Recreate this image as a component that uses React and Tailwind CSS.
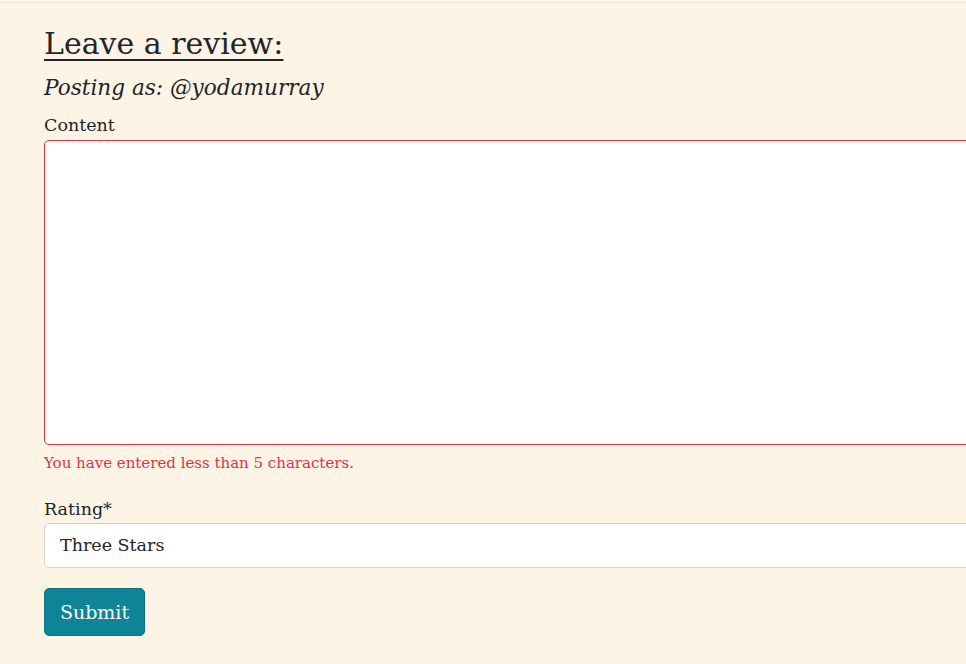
import React from "react";

const serif = { fontFamily: '"DejaVu Serif", "Liberation Serif", serif' };

export default function App() {
  return (
    <div className="min-h-[664px] w-full overflow-hidden bg-[#fdf4e6] text-[#212529]" style={serif}>
      <div className="h-[3px] border-b border-[#ece6dc]" />
      <div className="pl-[44px] pt-[20px]">
        <h2 className="text-[30px] leading-[42px] underline decoration-2 underline-offset-[5px]">
          Leave a review:
        </h2>
        <h4 className="mt-[8px] text-[21.6px] leading-[30px] italic">Posting as: @yodamurray</h4>

        <form className="mt-[10px]" onSubmit={(e) => e.preventDefault()}>
          <label className="block text-[17.5px] leading-[24px]">Content</label>
          <textarea
            className="mt-[3px] block h-[305px] w-[1000px] resize-none rounded-[5px] border border-[#dc3545] bg-white px-3 py-2 outline-none"
          />
          <div className="mt-[8px] text-[15px] leading-[20px] text-[#dc3545]">
            You have entered less than 5 characters.
          </div>

          <label className="mt-[24px] block text-[17.5px] leading-[24px]">Rating*</label>
          <div className="mt-[2px] flex h-[45px] w-[1000px] items-center rounded-[5px] border border-[#d6d3cd] bg-white px-[15px] text-[17.5px]">
            Three Stars
          </div>

          <button
            type="submit"
            className="mt-[20px] h-[48px] w-[101px] rounded-[5px] border border-[#0b7482] bg-[#0e8596] text-[19px] text-white"
          >
            Submit
          </button>
        </form>
      </div>
    </div>
  );
}
